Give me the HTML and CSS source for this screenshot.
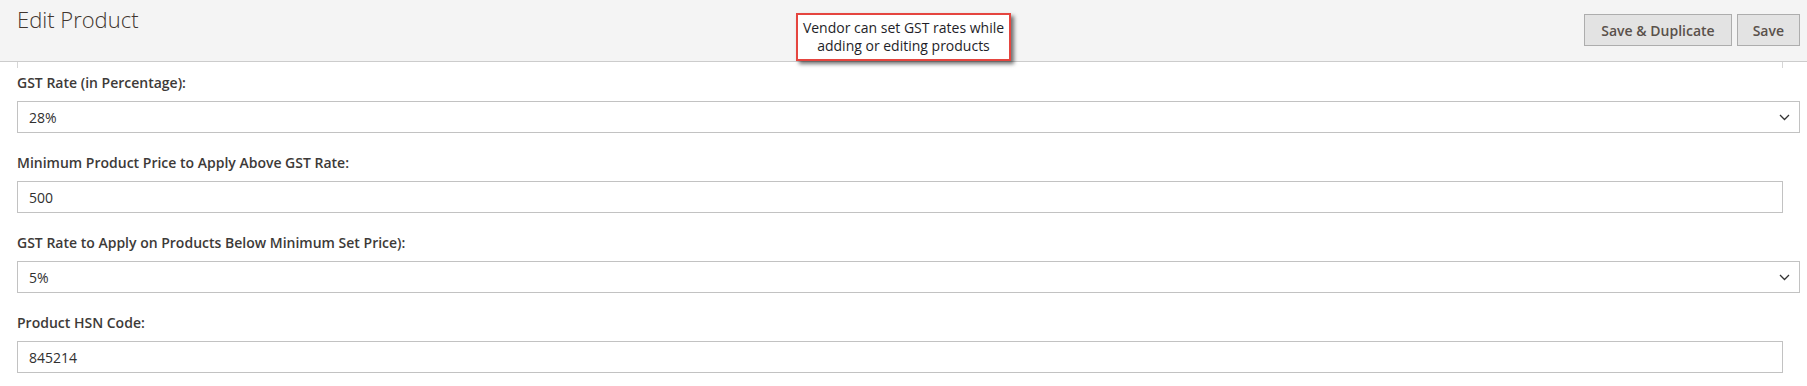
FILE: index.html
```html
<!DOCTYPE html>
<html lang="en">
<head>
    <meta charset="UTF-8">
    <meta name="viewport" content="width=device-width, initial-scale=1.0">
    <title>Edit Product</title>
    <link rel="stylesheet" href="styles.css">
</head>
<body>
    <header class="page-header">
        <h1 class="page-title">Edit Product</h1>
        <div class="callout">Vendor can set GST rates while<br>adding or editing products</div>
        <div class="page-actions">
            <button type="button" class="btn">Save &amp; Duplicate</button>
            <button type="button" class="btn btn-save">Save</button>
        </div>
    </header>

    <div class="fieldset-edge"></div>

    <form class="gst-form">
        <div class="field">
            <label class="field-label" for="gstRate">GST Rate (in Percentage):</label>
            <div class="select-wrap">
                <select id="gstRate" class="control">
                    <option>0%</option>
                    <option>5%</option>
                    <option>12%</option>
                    <option>18%</option>
                    <option selected>28%</option>
                </select>
                <svg class="chevron" width="11" height="7" viewBox="0 0 11 7"><path d="M1 1 L5.5 5.5 L10 1" fill="none" stroke="#333" stroke-width="1.3"/></svg>
            </div>
        </div>

        <div class="field">
            <label class="field-label" for="minPrice">Minimum Product Price to Apply Above GST Rate:</label>
            <input id="minPrice" type="text" class="control control-input" value="500">
        </div>

        <div class="field">
            <label class="field-label" for="gstBelow">GST Rate to Apply on Products Below Minimum Set Price):</label>
            <div class="select-wrap">
                <select id="gstBelow" class="control">
                    <option>0%</option>
                    <option selected>5%</option>
                    <option>12%</option>
                    <option>18%</option>
                    <option>28%</option>
                </select>
                <svg class="chevron" width="11" height="7" viewBox="0 0 11 7"><path d="M1 1 L5.5 5.5 L10 1" fill="none" stroke="#333" stroke-width="1.3"/></svg>
            </div>
        </div>

        <div class="field">
            <label class="field-label" for="hsnCode">Product HSN Code:</label>
            <input id="hsnCode" type="text" class="control control-input" value="845214">
        </div>
    </form>
</body>
</html>
```

FILE: styles.css
```css
/* General Styles */
body {
    margin: 0;
    font-family: "Open Sans", "Noto Sans", Arial, sans-serif;
    color: #303030;
    background: #fff;
}

/* Header */
.page-header {
    display: grid;
    grid-template-columns: 1fr auto 1fr;
    align-items: start;
    height: 61px;
    background: #f4f4f4;
    border-bottom: 1px solid #cccccc;
}

.page-title {
    margin: 0;
    padding: 4px 0 0 17px;
    font-size: 22px;
    font-weight: 300;
    line-height: 30px;
    color: #41362f;
}

/* Annotation box over the header */
.callout {
    position: relative;
    z-index: 2;
    margin-top: 13px;
    width: 215px;
    height: 48px;
    box-sizing: border-box;
    padding-top: 4px;
    border: 2px solid #e5453f;
    background: #fff;
    box-shadow: 3px 3px 4px rgba(0, 0, 0, 0.55);
    font-size: 14px;
    line-height: 18px;
    color: #1e1e28;
    text-align: center;
}

.page-actions {
    display: flex;
    justify-content: flex-end;
    gap: 5px;
    padding: 14px 7px 0 0;
}

.btn {
    height: 32px;
    padding: 0 16px;
    background: #e3e3e3;
    border: 1px solid #adadad;
    font-family: "Open Sans", "Noto Sans", Arial, sans-serif;
    font-size: 14px;
    font-weight: 600;
    color: #5a514b;
    cursor: pointer;
}

.btn-save {
    padding: 0 15px;
}

/* Edge of the box scrolled under the header */
.fieldset-edge {
    height: 6px;
    margin: 0 24px -6px 17px;
    border-left: 1px solid #d6d6d6;
    border-right: 1px solid #d6d6d6;
}

/* Form */
.gst-form {
    padding: 11px 7px 0 17px;
}

.field {
    margin-bottom: 20px;
}

.field-label {
    display: block;
    margin-bottom: 8px;
    font-size: 14px;
    font-weight: 600;
    line-height: 20px;
    color: #3d3a38;
}

.select-wrap {
    position: relative;
}

.control {
    display: block;
    width: 100%;
    height: 32px;
    box-sizing: border-box;
    border: 1px solid #c2c2c2;
    border-radius: 0;
    background: #fff;
    padding: 0 11px;
    font-family: "Open Sans", "Noto Sans", Arial, sans-serif;
    font-size: 14px;
    color: #303030;
    appearance: none;
    -webkit-appearance: none;
    outline: none;
}

.control-input {
    width: calc(100% - 17px);
}

.chevron {
    position: absolute;
    right: 10px;
    top: 13px;
    pointer-events: none;
}
```
